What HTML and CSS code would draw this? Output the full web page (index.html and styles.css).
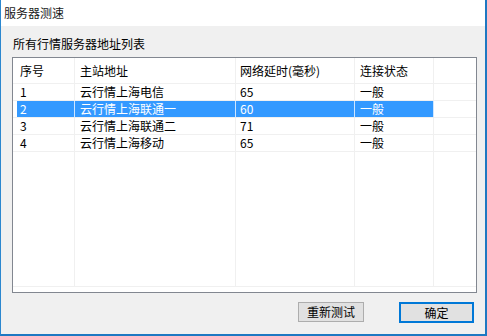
FILE: index.html
```html
<!DOCTYPE html>
<html lang="zh-CN">
<head>
<meta charset="utf-8">
<title>服务器测速</title>
<link rel="stylesheet" href="styles.css">
</head>
<body>
<div class="window">
  <div class="titlebar">服务器测速</div>
  <div class="content">
    <div class="group-label">所有行情服务器地址列表</div>
    <div class="listbox">
      <div class="row header">
        <div class="cell c1">序号</div>
        <div class="cell c2">主站地址</div>
        <div class="cell c3">网络延时(毫秒)</div>
        <div class="cell c4">连接状态</div>
        <div class="cell c5"></div>
      </div>
      <div class="row">
        <div class="cell c1">1</div>
        <div class="cell c2">云行情上海电信</div>
        <div class="cell c3">65</div>
        <div class="cell c4">一般</div>
        <div class="cell c5"></div>
      </div>
      <div class="row selected">
        <div class="cell c1">2</div>
        <div class="cell c2">云行情上海联通一</div>
        <div class="cell c3">60</div>
        <div class="cell c4">一般</div>
        <div class="cell c5"></div>
      </div>
      <div class="row">
        <div class="cell c1">3</div>
        <div class="cell c2">云行情上海联通二</div>
        <div class="cell c3">71</div>
        <div class="cell c4">一般</div>
        <div class="cell c5"></div>
      </div>
      <div class="row">
        <div class="cell c1">4</div>
        <div class="cell c2">云行情上海移动</div>
        <div class="cell c3">65</div>
        <div class="cell c4">一般</div>
        <div class="cell c5"></div>
      </div>
      <div class="row filler">
        <div class="cell c1"></div>
        <div class="cell c2"></div>
        <div class="cell c3"></div>
        <div class="cell c4"></div>
        <div class="cell c5"></div>
      </div>
    </div>
    <div class="buttons">
      <button class="btn retest">重新测试</button>
      <button class="btn ok">确定</button>
    </div>
  </div>
</div>
</body>
</html>
```

FILE: styles.css
```css
html, body {
  margin: 0;
  padding: 0;
}
body {
  width: 487px;
  height: 336px;
  overflow: hidden;
  font-family: "Noto Sans CJK SC", "Microsoft YaHei", sans-serif;
  font-size: 12px;
  color: #000;
}
.window {
  box-sizing: border-box;
  width: 487px;
  height: 336px;
  border-left: 1px solid #2b87cf;
  border-right: 2px solid #1e78c2;
  border-bottom: 2px solid #1e78c2;
  background: #f0f0f0;
  display: flex;
  flex-direction: column;
}
.titlebar {
  height: 26px;
  background: #ffffff;
  line-height: 26px;
  padding-left: 3px;
  font-size: 12px;
  color: #1a1a1a;
}
.content {
  flex: 1;
  padding: 10px 8px 0 11px;
  display: flex;
  flex-direction: column;
}
.group-label {
  height: 16px;
  line-height: 16px;
  margin-left: 1px;
}
.listbox {
  box-sizing: border-box;
  margin-top: 5px;
  height: 236px;
  border: 1px solid #828790;
  background: #ffffff;
  display: flex;
  flex-direction: column;
  padding-bottom: 5px;
}
.row {
  display: grid;
  grid-template-columns: 62px 161px 119px 79px 1fr;
  height: 17px;
  line-height: 16px;
}
.row.header {
  height: 26px;
  line-height: 25px;
}
.cell {
  box-sizing: border-box;
  border-right: 1px solid #f0f0f0;
  border-bottom: 1px solid #f0f0f0;
  white-space: nowrap;
  overflow: hidden;
}
.cell.c5 {
  border-right: none;
}
.c1 { padding-left: 7px; }
.c2 { padding-left: 5px; }
.c3 { padding-left: 4px; }
.c4 { padding-left: 5px; }
.row.selected .c2,
.row.selected .c3,
.row.selected .c4 {
  background: #3399ff;
  color: #ffffff;
  border-right-color: #cfe6ff;
}
.row.selected .c1 {
  background: linear-gradient(to right, transparent 4px, #3399ff 4px);
  color: #ffffff;
  border-right-color: #cfe6ff;
}
.row.filler {
  flex: 1;
  height: auto;
}
.buttons {
  display: flex;
  justify-content: flex-end;
  gap: 35px;
  margin-top: 9px;
  padding-right: 3px;
}
.btn {
  box-sizing: border-box;
  height: 20px;
  margin: 0;
  padding: 0;
  font-family: "Noto Sans CJK SC", "Microsoft YaHei", sans-serif;
  font-size: 12px;
  line-height: 16px;
  color: #000;
  background: #e1e1e1;
  border: 1px solid #adadad;
}
.btn.retest {
  width: 66px;
}
.btn.ok {
  width: 75px;
  height: 21px;
  border: 2px solid #0078d7;
}
```
